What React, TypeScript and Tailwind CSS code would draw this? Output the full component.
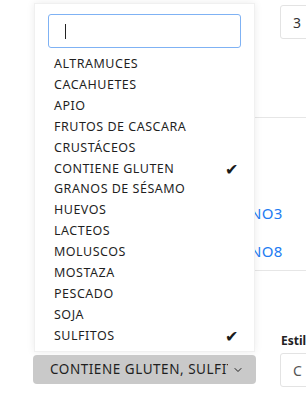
import { ChevronDown } from "lucide-react";

const alergenos = [
  "ALTRAMUCES",
  "CACAHUETES",
  "APIO",
  "FRUTOS DE CASCARA",
  "CRUSTÁCEOS",
  "CONTIENE GLUTEN",
  "GRANOS DE SÉSAMO",
  "HUEVOS",
  "LACTEOS",
  "MOLUSCOS",
  "MOSTAZA",
  "PESCADO",
  "SOJA",
  "SULFITOS",
];

const seleccionados = ["CONTIENE GLUTEN", "SULFITOS"];

const App = () => {
  return (
    <div className="relative w-[306px] h-[406px] overflow-hidden bg-white font-['Noto_Sans',sans-serif] text-[#222]">
      {/* page behind the popover */}
      <div className="flex flex-col pt-[5px]">
        <div className="ml-[280px] h-[34px] w-[60px] border border-[#e3e3e3] rounded-[3px] flex items-center pl-[12px] text-[14px] text-[#333]">
          3
        </div>
        <div className="mt-[78px] ml-[200px] border-t border-[#e6e6e6]"></div>
        <div className="ml-[218px] mt-[86px] flex flex-col gap-[19px] text-[15px] leading-[19px] text-[#1d7cf2] tracking-[0.02em]">
          <span>ABONO3</span>
          <span>ABONO8</span>
        </div>
        <div className="mt-[9px] ml-[200px] border-t border-[#e6e6e6]"></div>
        <div className="ml-[281px] mt-[63px] text-[12px] font-bold leading-[14px] text-[#222]">
          Estilo
        </div>
        <div className="ml-[280px] mt-[5px] h-[34px] w-[60px] border border-[#e3e3e3] rounded-[3px] flex items-center pl-[12px] text-[14px] text-[#555]">
          C
        </div>
      </div>

      {/* dropdown popover */}
      <div className="absolute left-[34px] top-[3px] w-[221px] h-[349px] bg-white shadow-[0_0_8px_rgba(0,0,0,0.08)] border border-[#f0f0f0]">
        <div className="mx-[13px] mt-[10px] h-[34px] border-[1.5px] border-[#7fb2f4] rounded-[3px] flex items-center pl-[16px]">
          <div className="w-px h-[15px] bg-[#222]"></div>
        </div>
        <ul className="mt-[6px] pl-[19px] pr-[16px] text-[12.5px] tracking-[0.04em] text-[#1f1f1f]">
          {alergenos.map((a) => (
            <li key={a} className="flex items-center justify-between h-[20.9px]">
              <span>{a}</span>
              {seleccionados.includes(a) && <span className="text-[16px] leading-none text-[#1a1a1a]">✔</span>}
            </li>
          ))}
        </ul>
      </div>

      {/* trigger */}
      <div className="absolute left-[33px] top-[355px] w-[223px] h-[29px] bg-[#c9c9c9] rounded-[4px] flex items-center pl-[17px] pr-[12px] gap-[4px] text-[13.5px] tracking-[0.04em] text-[#1f1f1f]">
        <span className="flex-1 overflow-hidden whitespace-nowrap">CONTIENE GLUTEN, SULFITOS</span>
        <ChevronDown className="w-[12px] h-[12px] shrink-0" strokeWidth={2} />
      </div>
    </div>
  );
};

export default App;
